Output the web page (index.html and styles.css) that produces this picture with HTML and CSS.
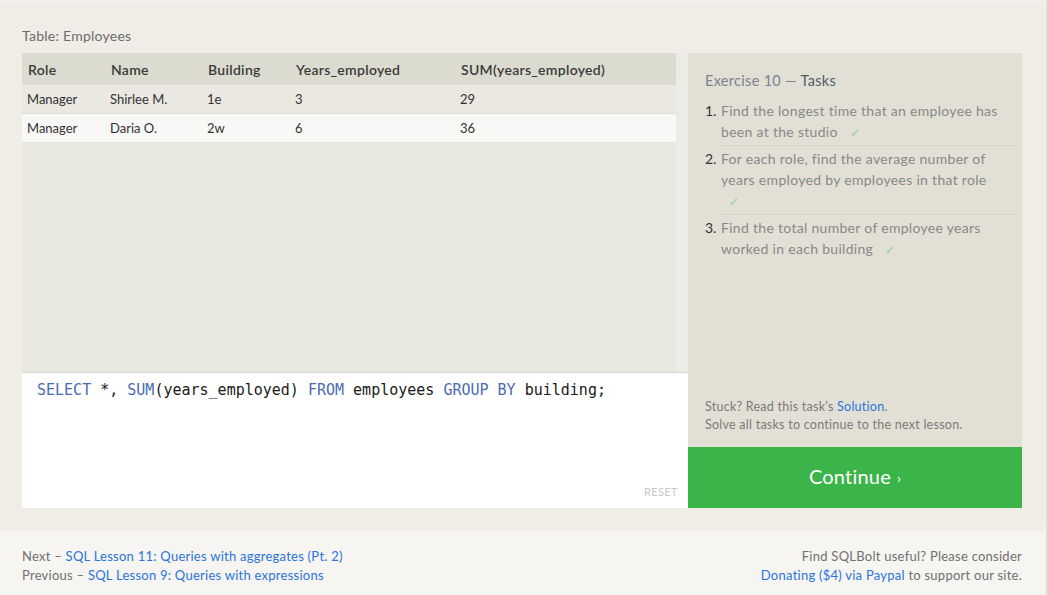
FILE: index.html
```html
<!DOCTYPE html>
<html>
<head>
<meta charset="utf-8">
<link rel="stylesheet" href="styles.css">
</head>
<body>
<div class="page">
  <div class="main">
    <div class="table-title">Table: Employees</div>
    <div class="workspace">
      <div class="left">
        <div class="table-pane">
          <div class="table-scroll">
            <table class="results">
              <colgroup>
                <col class="c1"><col class="c2"><col class="c3"><col class="c4"><col class="c5">
              </colgroup>
              <thead>
                <tr><th>Role</th><th>Name</th><th>Building</th><th>Years_employed</th><th>SUM(years_employed)</th></tr>
              </thead>
              <tbody>
                <tr class="odd"><td>Manager</td><td>Shirlee M.</td><td>1e</td><td>3</td><td>29</td></tr>
                <tr class="even"><td>Manager</td><td>Daria O.</td><td>2w</td><td>6</td><td>36</td></tr>
              </tbody>
            </table>
          </div>
          <div class="scroll-track"></div>
        </div>
        <div class="editor">
          <div class="code"><span class="kw">SELECT</span> *, <span class="kw">SUM</span>(years_employed) <span class="kw">FROM</span> employees <span class="kw">GROUP BY</span> building;</div>
          <div class="reset">RESET</div>
        </div>
      </div>
      <div class="right">
        <div class="tasks-panel">
          <div class="tasks-head"><span class="ex">Exercise 10 —</span> <span class="tk">Tasks</span></div>
          <ol class="tasks">
            <li><span class="num">1.</span><span class="txt">Find the longest time that an employee has been at the studio <span class="check">✓</span></span></li>
            <li><span class="num">2.</span><span class="txt">For each role, find the average number of years employed by employees in that role <span class="check">✓</span></span></li>
            <li class="last"><span class="num">3.</span><span class="txt">Find the total number of employee years worked in each building <span class="check">✓</span></span></li>
          </ol>
          <div class="stuck">
            <div>Stuck? Read this task's <a class="link">Solution</a>.</div>
            <div>Solve all tasks to continue to the next lesson.</div>
          </div>
        </div>
        <div class="continue">Continue <span class="chev">›</span></div>
      </div>
    </div>
  </div>
  <div class="footer">
    <div class="f-left">
      <div>Next – <a class="link">SQL Lesson 11: Queries with aggregates (Pt. 2)</a></div>
      <div>Previous – <a class="link">SQL Lesson 9: Queries with expressions</a></div>
    </div>
    <div class="f-right">
      <div>Find SQLBolt useful? Please consider</div>
      <div><a class="link">Donating ($4) via Paypal</a> to support our site.</div>
    </div>
  </div>
</div>
</body>
</html>
```

FILE: styles.css
```css
html, body {
  margin: 0;
  padding: 0;
  background: #dedbd6;
}
body {
  font-family: Lato, "Open Sans", sans-serif;
  width: 1048px;
  height: 595px;
  overflow: hidden;
}
.page {
  width: 1045px;
  height: 595px;
  border-right: 1px solid #f4f2ee;
  background: #f6f5f1;
  display: flex;
  flex-direction: column;
}
.main {
  background: #f0ede6;
  border-top: 1px solid #f5f3ef;
  border-bottom-right-radius: 4px;
  padding: 25px 22px 22px 22px;
  height: 531px;
  box-sizing: border-box;
}
.table-title {
  font-size: 14px;
  letter-spacing: 0.25px;
  color: #6c6c6c;
  line-height: 20px;
  margin-bottom: 7px;
}
.workspace {
  display: flex;
  width: 1000px;
}
.left {
  width: 666px;
  display: flex;
  flex-direction: column;
}
.table-pane {
  height: 319px;
  background: #e9e8e0;
  display: flex;
}
.table-scroll {
  flex: 1;
}
.scroll-track {
  width: 12px;
  background: #ecebe5;
}
.results {
  border-collapse: collapse;
  width: 654px;
  table-layout: fixed;
}
col.c1 { width: 83px; }
col.c2 { width: 97px; }
col.c3 { width: 88px; }
col.c4 { width: 165px; }
col.c5 { width: 221px; }
.results th {
  background: #dcdbd0;
  text-align: left;
  font-weight: 600;
  font-size: 14px;
  letter-spacing: 0.3px;
  color: #3a3a3a;
  height: 32px;
  padding: 0 0 0 6px;
}
.results td {
  font-size: 13px;
  color: #333;
  height: 28px;
  padding: 0 0 0 5px;
}
.results tr.odd td {
  background: #eae8e1;
  border-bottom: 1px solid #dddbd3;
}
.results tr.even td {
  background: #f8f8f6;
}
.editor {
  height: 136px;
  box-sizing: border-box;
  background: #fff;
  border-top: 1px solid #d9d7cf;
  padding: 7px 15px 0 15px;
  position: relative;
}
.code {
  font-family: "DejaVu Sans Mono", monospace;
  font-size: 15px;
  line-height: 20px;
  color: #1a1a1a;
}
.kw {
  color: #4a6cb3;
}
.reset {
  position: absolute;
  right: 10px;
  bottom: 10px;
  font-size: 11px;
  letter-spacing: 0.4px;
  color: #c9c9c9;
}
.right {
  width: 334px;
  display: flex;
  flex-direction: column;
}
.tasks-panel {
  height: 394px;
  box-sizing: border-box;
  background: #e2e0d5;
  padding: 18px 7px 0 17px;
  display: flex;
  flex-direction: column;
}
.tasks-head {
  font-size: 14.5px;
  letter-spacing: 0.3px;
  line-height: 20px;
  margin-bottom: 7px;
}
.ex { color: #7d8190; }
.tk { color: #515a6a; }
.tasks {
  list-style: none;
  margin: 0;
  padding: 0;
}
.tasks li {
  display: flex;
  font-size: 14px;
  letter-spacing: 0.3px;
  line-height: 21px;
  padding: 2px 0 0 0;
}
.tasks li .num {
  width: 16px;
  color: #333;
  flex: none;
  letter-spacing: 0;
}
.tasks li .txt {
  flex: 1;
  color: #888;
  border-bottom: 1px solid #d4d2c7;
  padding-bottom: 3px;
  padding-right: 8px;
}
.tasks li.last .txt {
  border-bottom: none;
}
.check {
  display: inline-block;
  color: #8fd19c;
  font-size: 12px;
  line-height: 14px;
  margin-left: 8px;
}
.stuck {
  margin-top: auto;
  margin-bottom: 13px;
  font-size: 12.5px;
  letter-spacing: 0.25px;
  line-height: 18px;
  color: #7a7a7a;
}
.link {
  color: #2a74dc;
  text-decoration: none;
}
.continue {
  height: 61px;
  padding-bottom: 3px;
  box-sizing: border-box;
  background: #3bb54a;
  color: #fff;
  font-size: 20px;
  letter-spacing: 0.2px;
  display: flex;
  align-items: center;
  justify-content: center;
}
.chev {
  font-size: 14px;
  margin-left: 6px;
  padding-top: 3px;
}
.footer {
  display: flex;
  justify-content: space-between;
  padding: 16px 23px 0 22px;
  font-size: 13px;
  letter-spacing: 0.25px;
  line-height: 19px;
  color: #707070;
}
.f-right {
  text-align: right;
}
```
